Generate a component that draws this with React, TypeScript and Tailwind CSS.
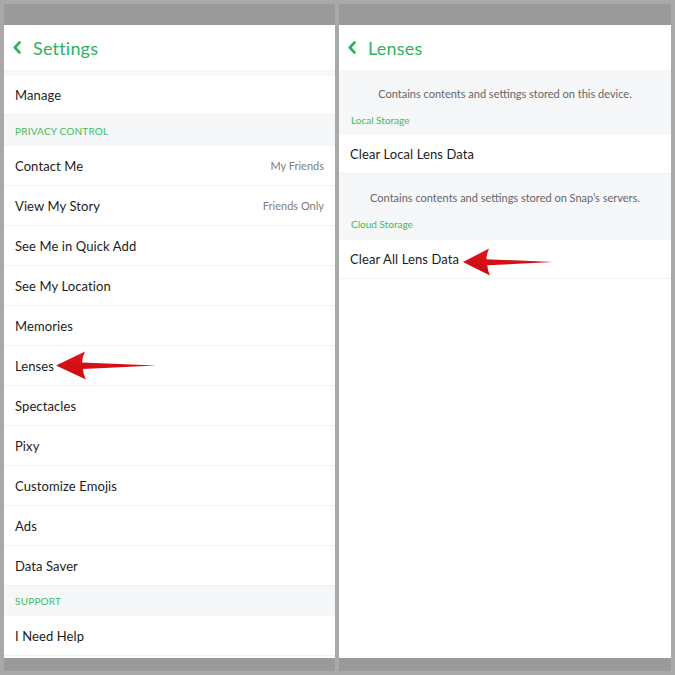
import React from "react";

const font = { fontFamily: "Lato, 'Open Sans', sans-serif" };

function Chevron() {
  return (
    <svg width="8" height="13" viewBox="0 0 8 13" className="shrink-0">
      <path d="M6.5 1.5 L1.8 6.5 L6.5 11.5" fill="none" stroke="#2eb35b" strokeWidth="2.6" strokeLinecap="round" strokeLinejoin="round" />
    </svg>
  );
}

function Header({ title }: { title: string }) {
  return (
    <div className="h-[45px] bg-white flex items-center pl-[9px] gap-[12px] shrink-0">
      <Chevron />
      <span className="text-[18px] text-[#2eb35b] leading-none tracking-[0.2px]">{title}</span>
    </div>
  );
}

function Row({ label, value, h = 40 }: { label: string; value?: string; h?: number }) {
  return (
    <div
      className="flex items-center justify-between px-[11px] pt-[2px] bg-white border-b border-[#f1f2f3] shrink-0"
      style={{ height: h }}
    >
      <span className="text-[13px] text-[#1c1c1c] tracking-[0.1px]">{label}</span>
      {value && <span className="text-[11px] text-[#7d7d7d]">{value}</span>}
    </div>
  );
}

function Section({ label, h }: { label: string; h: number }) {
  return (
    <div className="bg-[#f6f7f8] flex items-center px-[11px] pt-[1px] shrink-0" style={{ height: h }}>
      <span className="text-[10px] text-[#3dbb62] tracking-[0.2px]">{label}</span>
    </div>
  );
}

function Info({ text, label, h }: { text: string; label: string; h: number }) {
  return (
    <div className="bg-[#f6f7f8] flex flex-col px-[12px] shrink-0" style={{ height: h }}>
      <div className="pt-[16px] text-center text-[11px] text-[#666] leading-[16px]">{text}</div>
      <div className="pt-[11px] text-[10px] text-[#3dbb62] leading-[14px]">{label}</div>
    </div>
  );
}

function Arrow({ w, h }: { w: number; h: number }) {
  return (
    <svg width={w} height={h} viewBox="0 0 100 30" preserveAspectRatio="none" className="absolute">
      <defs>
        <linearGradient id="ar" x1="0" y1="0" x2="0" y2="1">
          <stop offset="0" stopColor="#e0161c" />
          <stop offset="1" stopColor="#c80a10" />
        </linearGradient>
      </defs>
      <path d="M0 15 L29 0.5 Q26 7 26 12 L100 15 L27 18.5 Q27 23 30 29.5 Z" fill="url(#ar)" />
    </svg>
  );
}

function Panel({ children, w }: { children: React.ReactNode; w: number }) {
  return (
    <div className="flex flex-col h-full" style={{ width: w }}>
      <div className="h-[21px] bg-[#9a9a9a] shrink-0" />
      <div className="flex-1 bg-white flex flex-col overflow-hidden relative">{children}</div>
      <div className="h-[13px] bg-[#9a9a9a] shrink-0" />
    </div>
  );
}

export default function App() {
  const privacy: [string, string?][] = [
    ["Contact Me", "My Friends"],
    ["View My Story", "Friends Only"],
    ["See Me in Quick Add"],
    ["See My Location"],
    ["Memories"],
    ["Lenses"],
    ["Spectacles"],
    ["Pixy"],
    ["Customize Emojis"],
    ["Ads"],
    ["Data Saver"],
  ];
  return (
    <div className="w-[675px] h-[675px] bg-[#a9a9a9] p-[4px] flex gap-[4px]" style={font}>
      <Panel w={331}>
        <Header title="Settings" />
        <div className="h-[6px] bg-[#f6f7f8] shrink-0" />
        <Row label="Manage" h={39} />
        <Section label="PRIVACY CONTROL" h={31} />
        {privacy.map(([l, v]) => (
          <Row key={l} label={l} value={v} />
        ))}
        <Section label="SUPPORT" h={30} />
        <Row label="I Need Help" />
        <div className="absolute left-[52px] top-[326px]">
          <Arrow w={100} h={29} />
        </div>
      </Panel>
      <Panel w={332}>
        <Header title="Lenses" />
        <Info text="Contains contents and settings stored on this device." label="Local Storage" h={65} />
        <Row label="Clear Local Lens Data" h={39} />
        <Info text="Contains contents and settings stored on Snap’s servers." label="Cloud Storage" h={66} />
        <Row label="Clear All Lens Data" h={39} />
        <div className="absolute left-[124px] top-[223px]">
          <Arrow w={90} h={28} />
        </div>
      </Panel>
    </div>
  );
}
